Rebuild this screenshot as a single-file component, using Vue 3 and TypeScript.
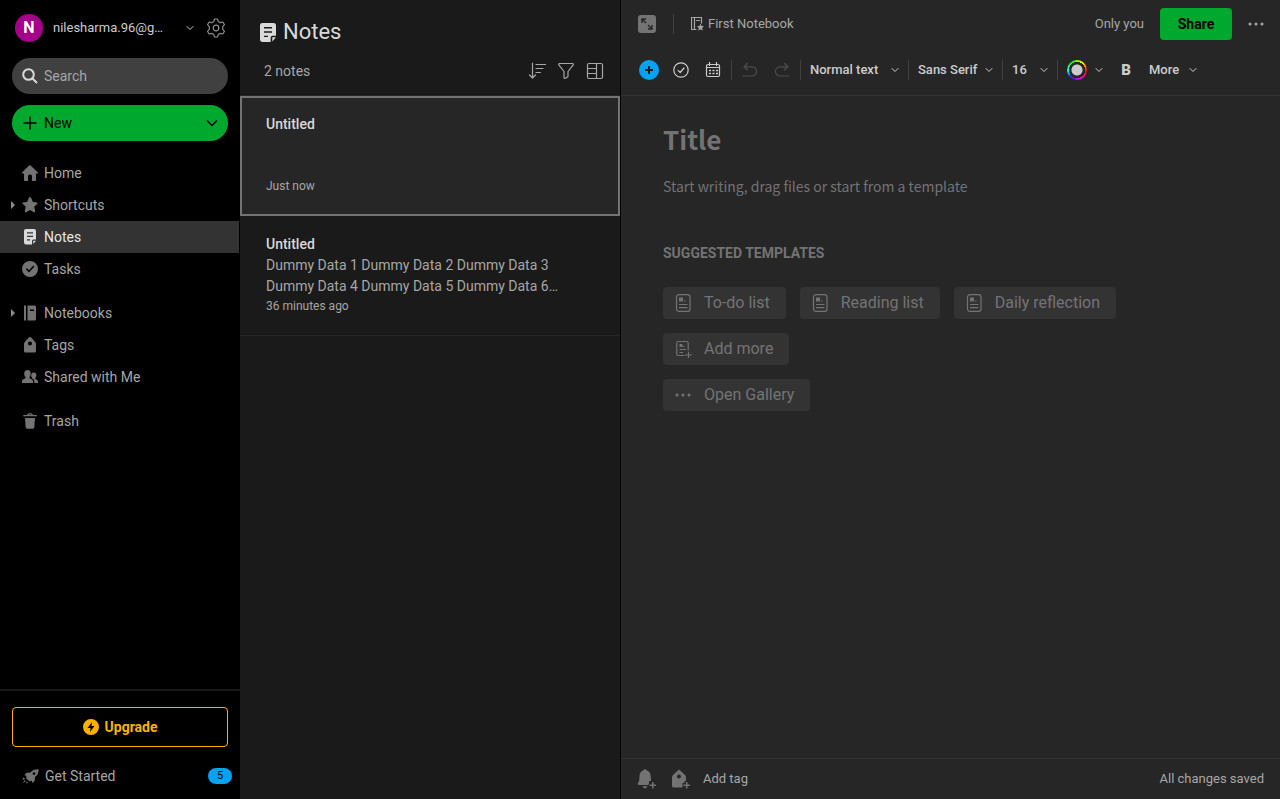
<script setup lang="ts">
import { ref } from 'vue'

interface NavItem {
  label: string
  icon: string
  expandable?: boolean
}

const groups: NavItem[][] = [
  [
    { label: 'Home', icon: 'home' },
    { label: 'Shortcuts', icon: 'star', expandable: true },
    { label: 'Notes', icon: 'note' },
    { label: 'Tasks', icon: 'task' },
  ],
  [
    { label: 'Notebooks', icon: 'notebook', expandable: true },
    { label: 'Tags', icon: 'tag' },
    { label: 'Shared with Me', icon: 'people' },
  ],
  [{ label: 'Trash', icon: 'trash' }],
]

const icons: Record<string, string> = {
  home: 'M8 0 L16 7.5 Q16 9 14.5 8.6 H14 V15 Q14 16 13 16 H10 V11 Q10 9.5 8 9.5 Q6 9.5 6 11 V16 H3 Q2 16 2 15 V8.6 H1.5 Q0 9 0 7.5 L6.8 .7 Q8 -.4 9.2 .7Z',
  star: 'M8 0 Q8.7 0 9.2 1.1 L10.9 5 15 5.4 Q16.2 5.8 15.3 6.8 L12.2 9.8 13.2 14.3 Q13.1 15.8 11.8 15.3 L8 13 4.2 15.3 Q2.9 15.8 2.8 14.3 L3.8 9.8 .7 6.8 Q-.2 5.8 1 5.4 L5.1 5 6.8 1.1 Q7.3 0 8 0Z',
  note: 'M4 0 H12 Q14 0 14 2 V10.5 H11.5 Q10 10.5 10 12 V15.5 H4 Q2 15.5 2 13.5 V2 Q2 0 4 0Z M5 3.3 V4.5 H11 V3.3Z M5 6.8 V8 H11 V6.8Z M5 10.3 V11.5 H8 V10.3Z M11.2 11.7 H14 L11.2 15Z',
  task: 'M8 0 A8 8 0 1 1 8 16 A8 8 0 1 1 8 0Z M3.8 8.2 L7 11.4 12.5 5.4 11.4 4.4 7 9.3 4.9 7.1Z',
  notebook: 'M2 .5 H4 V15.5 H2Z M5.5 .5 H12.5 Q14 .5 14 2 V14 Q14 15.5 12.5 15.5 H5.5Z M8 4.5 V6 H12 V4.5Z',
  tag: 'M8 0 Q8.8 0 9.4 .7 L13.2 5 Q14 6 14 7 V14 Q14 15.5 12.5 15.5 H3.5 Q2 15.5 2 14 V7 Q2 6 2.8 5 L6.6 .7 Q7.2 0 8 0Z M8 4.5 A2 2 0 1 0 8 8.5 A2 2 0 1 0 8 4.5Z',
  people: 'M5.5 1 C10 1 9 7 7.5 8 V9.3 L10 10.4 Q11 11 11 12.2 V14 H0 V12.2 Q0 11 1 10.4 L3.5 9.3 V8 C2 7 1 1 5.5 1Z M11.8 3.5 C15.6 3.5 14.5 8 13.3 9 V10 L15.2 11 Q16 11.6 16 12.6 V14 H12.3 V12 Q12.2 10.4 10.2 9.5 V9 C8.8 8 8.4 3.5 11.8 3.5Z',
  trash: 'M5 2 Q5.5 .3 7 .3 H9 Q10.500 .3 11 2 H14 Q15 2 15 3.300 H1 Q1 2 2 2Z M6.300 2 H9.700 Q9.300 1.400 8.500 1.400 H7.500 Q6.700 1.400 6.300 2Z M3 5 H13 L12.400 14 Q12.300 15.700 10.700 15.700 H5.300 Q3.700 15.700 3.600 14Z',
}

const notes = [
  { title: 'Untitled', text: '', time: 'Just now' },
  {
    title: 'Untitled',
    text: 'Dummy Data 1 Dummy Data 2 Dummy Data 3 Dummy Data 4 Dummy Data 5 Dummy Data 6…',
    time: '36 minutes ago',
  },
]

const active = ref('Notes')
const selected = ref(0)
const templates = ['To-do list', 'Reading list', 'Daily reflection']
</script>

<template>
  <div class="app">
    <aside class="sidebar">
      <div class="account">
        <button class="profile">
          <span class="avatar">N</span>
          <span class="email">nilesharma.96@g…</span>
          <svg class="chev" viewBox="0 0 8 8"><path d="M1 2.500 L4 5.500 7 2.500" /></svg>
        </button>
        <button class="gear" aria-label="Settings">
          <svg class="line" width="20" height="20" viewBox="0 0 20 20">
            <path d="M8.500 1 H11.500 L12.300 3.600 14.200 4.700 16.900 4 18.500 6.700 16.700 8.700 V11.300 L18.500 13.300 16.900 16 14.200 15.300 12.300 16.400 11.500 19 H8.500 L7.700 16.400 5.800 15.300 3.100 16 1.500 13.300 3.300 11.300 V8.700 L1.500 6.700 3.100 4 5.800 4.700 7.700 3.600Z" />
            <circle cx="10" cy="10" r="2.800" />
          </svg>
        </button>
      </div>

      <label class="search">
        <svg width="16" height="16" viewBox="0 0 16 16"><circle cx="6.500" cy="6.500" r="5.300" /><path d="M10.500 10.500 L15 15" /></svg>
        <input type="search" placeholder="Search" aria-label="Search" />
      </label>

      <button class="new">
        <svg width="16" height="16" viewBox="0 0 16 16"><path d="M8 1.500 V14.500 M1.500 8 H14.500" /></svg>
        <span>New</span>
        <svg class="end" width="12" height="8" viewBox="0 0 12 8"><path d="M1 1.500 L6 6.500 11 1.500" /></svg>
      </button>

      <nav>
        <ul v-for="(group, g) in groups" :key="g">
          <li v-for="item in group" :key="item.label">
            <a href="#" :class="{ active: active === item.label }" @click.prevent="active = item.label">
              <span class="caret"><svg v-if="item.expandable" width="4" height="8" viewBox="0 0 4 8"><path d="M0 0 L4 4 0 8Z" /></svg></span>
              <svg width="16" height="16" viewBox="0 0 16 16"><path fill-rule="evenodd" :d="icons[item.icon]" /></svg>
              <span>{{ item.label }}</span>
            </a>
          </li>
        </ul>
      </nav>

      <footer class="side-foot">
        <button class="upgrade">
          <svg width="16" height="16" viewBox="0 0 16 16"><path fill-rule="evenodd" d="M8 0 A8 8 0 1 1 8 16 A8 8 0 1 1 8 0Z M9 3 L4.500 9 H7.500 L7 13 11.500 7 H8.500Z" /></svg>
          Upgrade
        </button>
        <a class="started" href="#">
          <svg width="17" height="15" viewBox="0 0 17 15">
            <path fill-rule="evenodd" d="M16.600 .2 C13 0 10.500 1 8.500 3.500 L5 3.800 Q3.500 4 2.500 6.500 L4.500 6.800 Q3.800 8.600 4.500 9.800 L7 12 Q8.400 12.500 9.800 11.800 L10.300 14 Q12.800 12.500 12.800 11 L13 8 C15.800 6 16.700 3.500 16.600 .2Z M12 3.200 A1.400 1.400 0 1 0 12 6 A1.400 1.400 0 1 0 12 3.200Z M1.500 8.500 L3 9.500 1.800 10.800 .5 10Z M2.500 11 L3.800 12.300 1 14Z M4.500 12.500 L6.200 13.500 4.500 14.800Z" />
          </svg>
          <span>Get Started</span>
          <span class="count">5</span>
        </a>
      </footer>
    </aside>

    <section class="list">
      <header class="list-head">
        <h1>
          <svg width="16" height="19" viewBox="2 0 12 15.500" preserveAspectRatio="none"><path fill-rule="evenodd" :d="icons.note" /></svg>
          Notes
        </h1>
        <div class="list-tools">
          <span>2 notes</span>
          <button aria-label="Sort"><svg class="line" width="18" height="18" viewBox="0 0 18 18"><path d="M4.500 1 V16 M1.500 13 L4.500 16 7.500 13 M8 2.500 H17.500 M8 6.500 H15 M8 10.500 H12.500" /></svg></button>
          <button aria-label="Filter"><svg class="line" width="18" height="18" viewBox="0 0 18 18"><path d="M2.500 1.500 H15.500 Q16.800 1.800 16 3.200 L11 9.500 V14.500 L8.500 16.300 Q7 16.800 7 15.200 V9.500 L2 3.200 Q1.200 1.800 2.500 1.500Z" /></svg></button>
          <button aria-label="View options"><svg class="line" width="18" height="18" viewBox="0 0 18 18"><rect x="1.500" y="1.500" width="15" height="15" rx="1.500" /><path d="M10.500 1.500 V16.500 M1.500 6.500 H10.500 M1.500 11.500 H10.500" /></svg></button>
        </div>
      </header>
      <article v-for="(n, i) in notes" :key="i" class="card" :class="{ selected: selected === i }" @click="selected = i">
        <h2>{{ n.title }}</h2>
        <p>{{ n.text }}</p>
        <time>{{ n.time }}</time>
      </article>
    </section>

    <main class="editor">
      <header class="top">
        <button class="expand" aria-label="Expand note">
          <svg width="18" height="18" viewBox="0 0 18 18"><rect width="18" height="18" rx="3" /><path d="M8 8 L4 4 M4 8 V4 H8 M10 10 L14 14 M14 10 V14 H10" /></svg>
        </button>
        <i class="sep"></i>
        <a class="crumb" href="#">
          <svg width="13" height="14" viewBox="0 0 13 14"><path class="ln" d="M5 12.500 H.5 V.5 H10.500 V6 M3.500 .5 V12.500 M5.500 3.500 H8.500" /><path d="M9.500 6.500 L10.500 9 13 9.200 11.200 10.900 11.700 13.700 9.500 12.200 7.300 13.700 7.800 10.900 6 9.200 8.500 9Z" /></svg>
          First Notebook
        </a>
        <span class="only">Only you</span>
        <button class="share">Share</button>
        <button class="more" aria-label="More actions"><svg width="16" height="4" viewBox="0 0 16 4"><circle cx="2" cy="2" r="1.500" /><circle cx="8" cy="2" r="1.500" /><circle cx="14" cy="2" r="1.500" /></svg></button>
      </header>

      <div class="toolbar" role="toolbar" aria-label="Formatting">
        <button aria-label="Insert"><svg width="20" height="20" viewBox="0 0 20 20"><circle cx="10" cy="10" r="10" fill="#00a3f4" /><path d="M10 6 V14 M6 10 H14" stroke="#1a1a1a" stroke-width="2" /></svg></button>
        <button aria-label="Task"><svg class="line" width="16" height="16" viewBox="0 0 16 16"><circle cx="8" cy="8" r="7.200" /><path d="M5 8.300 L7.200 10.500 11 6" /></svg></button>
        <button aria-label="Calendar"><svg class="line" width="16" height="16" viewBox="0 0 16 16"><rect x="1.500" y="2.500" width="13" height="12" rx="1.500" /><path d="M1.500 5.500 H14.500 M4.500 .5 V3.500 M11.500 .5 V3.500" /><path class="dots" d="M4 8.500 H13 M4 11.500 H13" /></svg></button>
        <i class="sep"></i>
        <button class="dim" aria-label="Undo" disabled><svg class="line" width="16" height="16" viewBox="0 0 16 16"><path d="M5.500 1.500 L2 4.800 5.500 8 M2 4.800 H10 A4.600 4.600 0 0 1 10 14 H1" /></svg></button>
        <button class="dim" aria-label="Redo" disabled><svg class="line" width="16" height="16" viewBox="0 0 16 16"><path d="M10.500 1.500 L14 4.800 10.500 8 M14 4.800 H6 A4.600 4.600 0 0 0 6 14 H15" /></svg></button>
        <i class="sep"></i>
        <span class="pick style"><select aria-label="Text style"><option>Normal text</option></select><svg class="chev" viewBox="0 0 8 8"><path d="M1 2.500 L4 5.500 7 2.500" /></svg></span>
        <i class="sep"></i>
        <span class="pick font"><select aria-label="Font"><option>Sans Serif</option></select><svg class="chev" viewBox="0 0 8 8"><path d="M1 2.500 L4 5.500 7 2.500" /></svg></span>
        <i class="sep"></i>
        <span class="pick size"><select aria-label="Font size"><option>16</option></select><svg class="chev" viewBox="0 0 8 8"><path d="M1 2.500 L4 5.500 7 2.500" /></svg></span>
        <i class="sep"></i>
        <button class="color" aria-label="Text colour"><span class="wheel"></span><svg class="chev" viewBox="0 0 8 8"><path d="M1 2.500 L4 5.500 7 2.500" /></svg></button>
        <button class="bold" aria-label="Bold">B</button>
        <button class="more-format">More<svg class="chev" viewBox="0 0 8 8"><path d="M1 2.500 L4 5.500 7 2.500" /></svg></button>
      </div>

      <div class="page">
        <input class="title" placeholder="Title" aria-label="Title" />
        <textarea rows="1" placeholder="Start writing, drag files or start from a template" aria-label="Note body"></textarea>
        <h3>SUGGESTED TEMPLATES</h3>
        <div class="chips">
          <button v-for="t in templates" :key="t">
            <svg width="18" height="18" viewBox="0 0 18 18"><rect class="ln" x="2.500" y=".600" width="13.500" height="16.800" rx="2.500" /><path d="M5 3.500 H9 V7.500 H5Z M10 6.500 H11.500 V7.500 H10Z M5 10 H13.500 V11 H5Z M5 13 H13.500 V14.200 H5Z" /></svg>
            {{ t }}
          </button>
        </div>
        <div class="chips">
          <button>
            <svg width="18" height="18" viewBox="0 0 18 18"><path class="ln" d="M10 15.500 H4.500 Q2.800 15.500 2.800 14 V3 Q2.800 1.500 4.500 1.500 H12.500 Q14.200 1.500 14.200 3 V10 M14.500 12 V18 M11.500 15 H17.500" /><path d="M5.500 4 H8.500 V7 H5.500Z M9 6 H10.500 V7 H9Z M5.500 9 H12 V10 H5.500Z M5.500 12 H9 V13 H5.500Z" /></svg>
            Add more
          </button>
        </div>
        <div class="chips">
          <button>
            <svg width="18" height="18" viewBox="0 0 18 18"><circle cx="3" cy="9" r="1.500" /><circle cx="9" cy="9" r="1.500" /><circle cx="15" cy="9" r="1.500" /></svg>
            Open Gallery
          </button>
        </div>
      </div>

      <footer class="bottom">
        <button aria-label="Add reminder"><svg width="20" height="20" viewBox="0 0 20 20"><path d="M8 0 Q9 0 9.300 1.300 Q13.500 2.500 13.700 7 L14 10.500 V12 H12 V15 L11 16 H2 Q0 16 .8 14.200 L2.200 12 L2.500 7 Q2.700 2.500 6.700 1.300 Q7 0 8 0Z M5.500 17.200 H10.500 Q9.500 19.500 8 19.500 Q6.500 19.500 5.500 17.200Z" /><path d="M15 13 H16.500 V15.500 H19 V17 H16.500 V19.500 H15 V17 H12.500 V15.500 H15Z" /></svg></button>
        <button aria-label="Tag note"><svg width="20" height="20" viewBox="0 0 20 20"><path fill-rule="evenodd" d="M8 .5 L14 6 Q15 7 15 8.500 V12 H13.500 V14 H11.500 V18.500 H2.500 Q1 18.500 1 17 V8.500 Q1 7 2 6Z M8 5.500 A2 2 0 1 0 8 9.500 A2 2 0 1 0 8 5.500Z" /><path d="M15 13 H16.500 V15.500 H19 V17 H16.500 V19.500 H15 V17 H12.500 V15.500 H15Z" /></svg></button>
        <button class="addtag">Add tag</button>
        <span class="saved">All changes saved</span>
      </footer>
    </main>
  </div>
</template>

<style>
body {
  margin: 0;
  background: #000;
}
</style>

<style scoped>
.app {
  display: flex;
  height: 100vh;
  overflow: hidden;
  font: 14px/20px Roboto, "Liberation Sans", sans-serif;
  color: #a6a6a6;
}
* {
  box-sizing: border-box;
}
button,
input,
select,
textarea {
  font: inherit;
  color: inherit;
  background: none;
  border: 0;
  padding: 0;
  margin: 0;
  outline: 0;
}
button {
  display: flex;
  align-items: center;
  white-space: nowrap;
}
a {
  color: inherit;
  text-decoration: none;
}
svg {
  flex: none;
  fill: currentColor;
}
.line,
.chev,
.ln {
  fill: none;
  stroke: currentColor;
  stroke-width: 1.2;
  stroke-linecap: round;
  stroke-linejoin: round;
}
.chev {
  width: 8px;
  height: 8px;
  stroke-width: 1;
}
.dots {
  stroke-width: 1.5;
  stroke-linecap: butt;
  stroke-dasharray: 2 1.5;
}

.sidebar {
  flex: none;
  width: 240px;
  display: flex;
  flex-direction: column;
  background: #000;
}
.account {
  display: flex;
  align-items: center;
  height: 56px;
  padding: 0 14px 0 15px;
}
.profile {
  flex: 1;
  font-size: 13px;
  color: #ccc;
}
.avatar {
  width: 28px;
  height: 28px;
  margin-right: 10px;
  border-radius: 50%;
  background: #a6008a;
  color: #fff;
  font-size: 16px;
  font-weight: 700;
  line-height: 28px;
}
.email {
  flex: 1;
  text-align: left;
}
.profile .chev {
  margin-right: 12px;
}
.gear {
  color: #8c8c8c;
}
.search,
.new {
  display: flex;
  align-items: center;
  gap: 6px;
  height: 36px;
  margin: 2px 12px 0;
  padding: 0 10px;
  border-radius: 18px;
}
.search {
  background: #404040;
}
.search svg {
  fill: none;
  stroke: #d9d9d9;
  stroke-width: 2;
}
.search input {
  flex: 1;
  min-width: 0;
}
input::placeholder,
textarea::placeholder {
  color: inherit;
  opacity: 1;
}
.new {
  flex: none;
  margin-top: 11px;
  margin-bottom: 16px;
  background: #00a82d;
  color: #000;
}
.new svg {
  fill: none;
  stroke: #000;
  stroke-width: 1.5;
}
.new .end {
  margin-left: auto;
}
ul {
  list-style: none;
  margin: 0 0 12px;
  padding: 0;
}
nav a {
  display: flex;
  align-items: center;
  height: 32px;
  margin-right: 1px;
  padding-left: 11px;
}
nav svg {
  color: #737373;
  margin-right: 6px;
}
.caret {
  display: flex;
  width: 11px;
}
.caret svg {
  margin: 0;
  color: #8c8c8c;
}
nav a.active {
  background: #333;
  color: #e6e6e6;
}
nav a.active svg {
  color: #d9d9d9;
}
.side-foot {
  margin-top: auto;
  padding: 16px 12px 7px;
  border-top: 2px solid #1a1a1a;
}
.upgrade {
  width: 100%;
  height: 40px;
  justify-content: center;
  gap: 6px;
  border: 1px solid #ffb000;
  border-radius: 4px;
  color: #ffb000;
  font-weight: 700;
}
.started {
  display: flex;
  align-items: center;
  gap: 6px;
  height: 32px;
  margin: 13px -4px 0 10px;
}
.started svg {
  color: #737373;
}
.count {
  width: 24px;
  height: 16px;
  margin-left: auto;
  border-radius: 8px;
  background: #00a3f4;
  color: #000;
  font-size: 11px;
  line-height: 16px;
  text-align: center;
}

.list {
  flex: none;
  width: 381px;
  background: #1a1a1a;
  border-right: 1px solid #000;
}
.list-head {
  height: 96px;
  padding: 20px 16px 0 20px;
  border-bottom: 1px solid #262626;
}
h1 {
  display: flex;
  align-items: center;
  gap: 7px;
  margin: 0;
  color: #d9d9d9;
  font-size: 22px;
  font-weight: 400;
  line-height: 24px;
}
.list-tools {
  display: flex;
  align-items: center;
  gap: 11px;
  margin-top: 17px;
  padding-left: 4px;
}
.list-tools span {
  margin-right: auto;
}
.card {
  height: 120px;
  padding: 18px 50px 0 26px;
  border-bottom: 1px solid #262626;
  line-height: 21px;
}
.card.selected {
  padding: 16px 48px 0 24px;
  border: 2px solid #737373;
  background: #262626;
}
.card h2 {
  margin: 0;
  color: #d9d9d9;
  font-size: 14px;
  font-weight: 500;
}
.card p {
  height: 42px;
  margin: 0;
}
.card time {
  display: block;
  font-size: 12px;
  line-height: 18px;
}

.editor {
  flex: 1;
  min-width: 0;
  display: flex;
  flex-direction: column;
  background: #262626;
}
.top {
  display: flex;
  align-items: center;
  height: 48px;
  padding: 0 16px 0 17px;
  font-size: 13px;
}
.expand svg {
  color: #737373;
}
.expand path {
  fill: none;
  stroke: #262626;
  stroke-width: 1.4;
}
.sep {
  flex: none;
  width: 1px;
  height: 20px;
  background: #404040;
}
.top .sep {
  margin: 0 17px 0 17px;
}
.crumb {
  display: flex;
  align-items: center;
  gap: 4px;
}
.only {
  margin-left: auto;
}
.share {
  width: 72px;
  height: 32px;
  margin: 0 16px;
  justify-content: center;
  border-radius: 4px;
  background: #00a82d;
  color: #000;
  font-size: 14px;
  font-weight: 700;
}
.toolbar {
  display: flex;
  align-items: center;
  height: 48px;
  padding: 0 12px 4px;
  border-bottom: 1px solid #333;
  color: #ccc;
  font-size: 13px;
  font-weight: 500;
}
.toolbar > button {
  flex: none;
  width: 32px;
  justify-content: center;
}
.toolbar .sep {
  margin: 0 2px;
}
.toolbar > .dim {
  color: #4d4d4d;
}
.pick {
  display: flex;
  align-items: center;
  flex: none;
  margin: 0 7px;
}
.pick select {
  appearance: none;
  width: 100%;
}
.pick .chev {
  margin-left: -8px;
  pointer-events: none;
}
.pick option {
  background: #262626;
}
.style {
  width: 89px;
}
.font {
  width: 75px;
}
.size {
  width: 36px;
}
.toolbar > .color {
  width: auto;
  gap: 8px;
  margin: 0 7px;
}
.wheel {
  display: grid;
  place-items: center;
  width: 20px;
  height: 20px;
  border-radius: 50%;
  background: radial-gradient(circle, #ccc 0 5px, #262626 6px 8px, transparent 8px),
    conic-gradient(#8f0, #ff0, #f80, #f00, #f0a, #f0f, #80f, #04f, #0ff, #0f8, #0f0, #8f0);
}
.toolbar > .bold {
  font-size: 15px;
  font-weight: 900;
}
.toolbar > .more-format {
  width: 48px;
  margin-left: 7px;
  justify-content: space-between;
}
.page {
  flex: 1;
  padding: 23px 42px 0;
  color: #737373;
}
.title,
textarea {
  display: block;
  width: 100%;
  font-family: "Noto Sans CJK SC", "Noto Sans", sans-serif;
}
.title {
  height: 40px;
  font-size: 26px;
  font-weight: 600;
  line-height: 40px;
}
textarea {
  height: 24px;
  margin-top: 15px;
  font-size: 14px;
  line-height: 24px;
  resize: none;
  overflow: hidden;
}
h3 {
  margin: 45px 0 24px;
  font-size: 14px;
  font-weight: 700;
  line-height: 20px;
}
.chips {
  display: flex;
  flex-wrap: wrap;
  gap: 14px;
  margin-bottom: 14px;
  font-size: 16px;
}
.chips button {
  height: 32px;
  padding: 0 16px 0 11px;
  gap: 12px;
  border-radius: 4px;
  background: #333;
}
.bottom {
  display: flex;
  align-items: center;
  gap: 14px;
  height: 41px;
  padding: 0 16px;
  border-top: 1px solid #333;
  font-size: 13px;
}
.bottom svg {
  color: #737373;
}
.addtag {
  margin-left: -2px;
}
.saved {
  margin-left: auto;
}
</style>
